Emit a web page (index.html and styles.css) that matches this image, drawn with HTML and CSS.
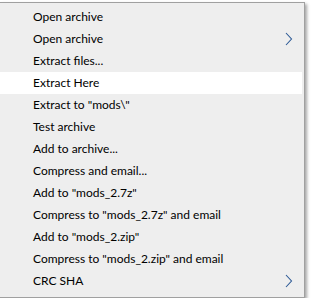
FILE: index.html
```html
<!DOCTYPE html>
<html lang="en">
<head>
    <meta charset="UTF-8">
    <title>7-Zip context menu</title>
    <link rel="stylesheet" href="styles.css">
</head>
<body>
    <div class="context-menu">
        <ul class="menu-list">
            <li>Open archive</li>
            <li class="has-sub">Open archive
                <svg class="arrow" width="8" height="14" viewBox="0 0 8 14"><path d="M1 1 L6.5 7 L1 13" fill="none" stroke="#2d5a96" stroke-width="1.1"/></svg>
            </li>
            <li>Extract files...</li>
            <li class="active">Extract Here</li>
            <li>Extract to "mods\"</li>
            <li>Test archive</li>
            <li>Add to archive...</li>
            <li>Compress and email...</li>
            <li>Add to "mods_2.7z"</li>
            <li>Compress to "mods_2.7z" and email</li>
            <li>Add to "mods_2.zip"</li>
            <li>Compress to "mods_2.zip" and email</li>
            <li class="has-sub">CRC SHA
                <svg class="arrow" width="8" height="14" viewBox="0 0 8 14"><path d="M1 1 L6.5 7 L1 13" fill="none" stroke="#2d5a96" stroke-width="1.1"/></svg>
            </li>
        </ul>
    </div>
</body>
</html>
```
FILE: styles.css
```css
body {
    margin: 0;
    padding: 0;
    background-color: #ffffff;
    font-family: 'Lato', 'Segoe UI', sans-serif;
    font-size: 12px;
    color: #000;
}

.context-menu {
    margin-top: 2px;
    width: 305px;
    box-sizing: border-box;
    background: #eeeeee;
    border-top: 1px solid #a0a0a0;
    border-right: 1px solid #a0a0a0;
    border-bottom: 1px solid #a0a0a0;
    padding: 3px 2px 5px 0;
    box-shadow: 2px 2px 3px rgba(0, 0, 0, 0.35);
}

.menu-list {
    list-style: none;
    margin: 0;
    padding: 0;
}

.menu-list li {
    height: 22px;
    line-height: 22px;
    padding-left: 33px;
    display: flex;
    align-items: center;
    justify-content: space-between;
    padding-right: 9px;
}

.menu-list li.active {
    background: #ffffff;
}

.arrow {
    display: block;
}
```
